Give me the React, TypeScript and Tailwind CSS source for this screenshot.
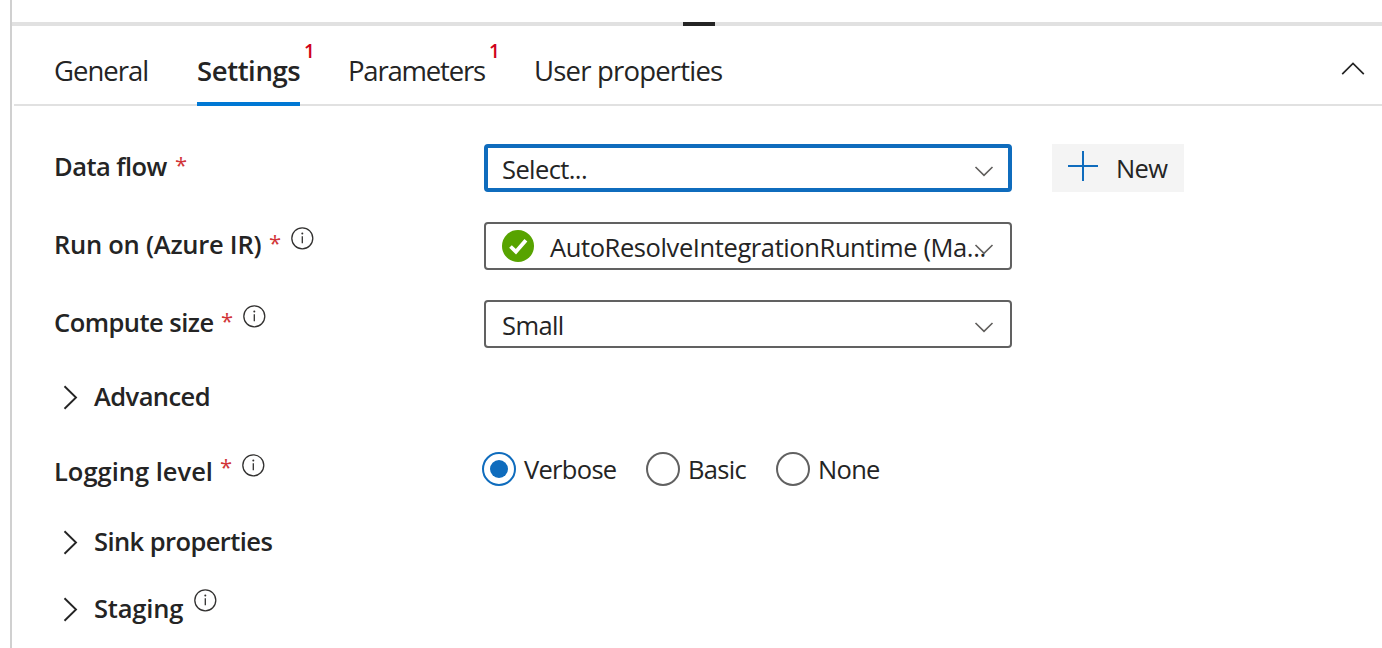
import type { ReactNode } from 'react';

function InfoIcon({ className = '' }: { className?: string }) {
  return (
    <svg className={`shrink-0 ${className}`} width="24" height="24" viewBox="0 0 24 24" fill="none">
      <circle cx="12.3" cy="12.3" r="10.5" stroke="#323130" strokeWidth="1.3" />
      <path d="M12.3 10.2v7" stroke="#323130" strokeWidth="1.3" />
      <circle cx="12.3" cy="7.6" r="1" fill="#323130" />
    </svg>
  );
}

function ChevronRight() {
  return (
    <svg className="mt-px shrink-0" width="16" height="26" viewBox="0 0 16 26" fill="none">
      <path d="M1.5 2.3 13 13.5 1.5 24.7" stroke="#242424" strokeWidth="1.9" />
    </svg>
  );
}

function ChevronDown({ className }: { className: string }) {
  return (
    <svg className={`absolute top-1/2 mt-[-3px] ${className}`} width="20" height="12" viewBox="0 0 20 12" fill="none">
      <path d="M1.5 2 10 10.3 18.5 2" stroke="#605e5c" strokeWidth="1.6" />
    </svg>
  );
}

function Tab({
  label,
  width,
  tracking,
  badge,
  active,
}: {
  label: string;
  width: string;
  tracking: string;
  badge?: boolean;
  active?: boolean;
}) {
  return (
    <div className={`relative flex h-full shrink-0 items-center ${width}`}>
      <span
        className={`relative top-1.5 whitespace-nowrap text-[27.5px] leading-9 ${tracking} ${active ? 'font-semibold' : ''}`}
      >
        {label}
      </span>
      {badge && (
        <span className="absolute top-[13px] left-full ml-1 text-[19px] leading-6 font-semibold text-[#d0021b]">1</span>
      )}
      {active && <span className="absolute inset-x-0 -bottom-0.5 h-1 bg-[#0078d4]" />}
    </div>
  );
}

function Label({
  width,
  tracking,
  children,
  required,
  info,
  star = 'pb-1',
}: {
  width: string;
  tracking: string;
  children: ReactNode;
  required?: boolean;
  info?: boolean;
  star?: string;
}) {
  return (
    <div className="flex h-9 w-[430px] shrink-0 items-center">
      <span className={`shrink-0 whitespace-nowrap font-semibold ${tracking} ${width}`}>{children}</span>
      {required && <span className={`w-7 shrink-0 pl-[7px] text-[22px] font-medium text-[#d13438] ${star}`}>*</span>}
      {info && <InfoIcon className="-mt-3" />}
    </div>
  );
}

function Select({ children, focused }: { children: ReactNode; focused?: boolean }) {
  return (
    <div
      className={`relative flex h-12 w-[528px] items-center rounded-[4px] bg-white ${
        focused ? 'border-4 border-[#0f6cbd] pl-[14px]' : 'border-2 border-[#616161] pl-4'
      }`}
    >
      {children}
      <ChevronDown className={focused ? 'right-[14px]' : 'right-4'} />
    </div>
  );
}

function Radio({ label, width, checked }: { label: string; width: string; checked?: boolean }) {
  return (
    <div className={`flex items-center gap-2 ${width}`}>
      <span
        className={`flex size-[34px] shrink-0 items-center justify-center rounded-full border-2 ${
          checked ? 'border-[#0f6cbd]' : 'border-[#616161]'
        }`}
      >
        {checked && <span className="size-[18px] rounded-full bg-[#0f6cbd]" />}
      </span>
      <span className="tracking-[-0.7px]">{label}</span>
    </div>
  );
}

function Expander({ label, tracking, info }: { label: string; tracking: string; info?: boolean }) {
  return (
    <div className="flex h-9 items-center pl-[9px]">
      <ChevronRight />
      <span className={`ml-[15px] whitespace-nowrap font-semibold ${tracking}`}>{label}</span>
      {info && <InfoIcon className="-mt-4 ml-2.5" />}
    </div>
  );
}

export default function App() {
  return (
    <div className="h-[648px] w-[1382px] overflow-hidden bg-white pl-2.5 font-['Open_Sans','Noto_Sans',sans-serif] text-[25.5px] leading-9 text-[#242424]">
      <div className="flex h-full flex-col border-l-2 border-[#d0d0d0]">
        <div className="mt-[22px] h-1 shrink-0 bg-[#e1e1e1] pl-[671px]">
          <div className="h-full w-8 bg-[#242424]" />
        </div>
        <div className="ml-0.5 flex h-20 shrink-0 items-center border-b-2 border-[#e1e1e1] pl-10">
          <Tab label="General" width="w-[94px] mr-[49px]" tracking="tracking-[-1px]" />
          <Tab label="Settings" width="w-[103px] mr-12" tracking="tracking-[-0.4px]" badge active />
          <Tab label="Parameters" width="w-[137px] mr-[49px]" tracking="tracking-[-1.2px]" badge />
          <Tab label="User properties" width="w-[190px]" tracking="tracking-[-0.8px]" />
          <svg className="mt-2 mr-4 ml-auto" width="26" height="16" viewBox="0 0 26 16" fill="none">
            <path d="M2.2 13.2 13 2.4 23.8 13.2" stroke="#242424" strokeWidth="1.7" />
          </svg>
        </div>
        <div className="flex flex-col pt-[38px] pl-[42px]">
          <div className="flex h-12 items-center">
            <div className="-mt-1">
              <Label width="w-[114px]" tracking="tracking-[-0.55px]" required>Data flow</Label>
            </div>
            <Select focused>
              <span className="mt-0.5 tracking-[-0.6px]">Select...</span>
            </Select>
            <button className="ml-10 flex h-12 w-[132px] items-center bg-[#f4f4f4] pl-4">
              <svg className="-mt-1" width="30" height="30" viewBox="0 0 30 30" fill="none">
                <path d="M15 0v30M0 15h30" stroke="#0f6cbd" strokeWidth="2" />
              </svg>
              <span className="ml-[18px] tracking-[-0.6px]">New</span>
            </button>
          </div>
          <div className="mt-[30px] flex h-12 items-center">
            <div className="-mt-1">
              <Label width="w-[208px]" tracking="tracking-[-0.25px]" required info>Run on (Azure IR)</Label>
            </div>
            <Select>
              <svg className="shrink-0" width="32" height="32" viewBox="0 0 32 32" fill="none">
                <circle cx="16" cy="16" r="16" fill="#57a300" />
                <path d="m8.5 16.5 5.4 5.2 10-11.5" stroke="#fff" strokeWidth="3.8" />
              </svg>
              <span className="mt-0.5 ml-4 whitespace-nowrap tracking-[-0.4px]">AutoResolveIntegrationRuntime (Ma...</span>
            </Select>
          </div>
          <div className="mt-[30px] flex h-12 items-center">
            <div className="-mt-1">
              <Label width="w-[160px]" tracking="tracking-[-0.53px]" required info>Compute size</Label>
            </div>
            <Select>
              <span className="mt-0.5 tracking-[-0.6px]">Small</span>
            </Select>
          </div>
          <div className="mt-[30px]"><Expander label="Advanced" tracking="tracking-[-0.57px]" /></div>
          <div className="mt-[37px] flex h-9 items-center">
            <div className="-ml-0.5 flex pt-1 pl-0.5">
              <Label width="w-[159px]" tracking="tracking-[0px]" star="pb-2.5" required info>Logging level</Label>
            </div>
            <div className="-ml-0.5 flex">
              <Radio label="Verbose" width="w-[164px]" checked />
              <Radio label="Basic" width="w-[130px]" />
              <Radio label="None" width="w-[130px]" />
            </div>
          </div>
          <div className="mt-9"><Expander label="Sink properties" tracking="tracking-[-0.57px]" /></div>
          <div className="mt-[31px]"><Expander label="Staging" tracking="tracking-[-0.2px]" info /></div>
        </div>
      </div>
    </div>
  );
}
